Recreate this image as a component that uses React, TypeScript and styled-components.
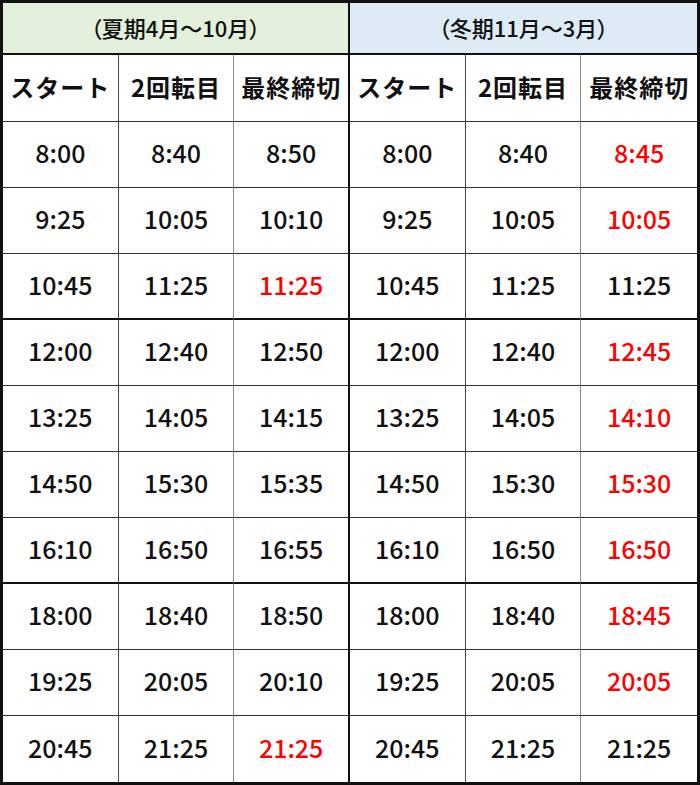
import React from "react";
import styled, { createGlobalStyle } from "styled-components";

const GlobalStyle = createGlobalStyle`
  html, body { margin: 0; padding: 0; background: #ffffff; }
  body { font-family: "Noto Sans CJK JP", "Noto Sans", sans-serif; }
`;

type Right = "thick" | "dark" | "light" | "none";
type Bottom = "thick" | "thin" | "none";

const rightBorder: Record<Right, string> = {
  thick: "2px solid #111",
  dark: "1px solid #444",
  light: "1px solid #8a8a8a",
  none: "none",
};
const bottomBorder: Record<Bottom, string> = {
  thick: "2px solid #111",
  thin: "1px solid #333",
  none: "none",
};

const Table = styled.div`
  box-sizing: border-box;
  width: 700px;
  height: 785px;
  border: 3px solid #111;
  display: grid;
  grid-template-columns: repeat(6, 1fr);
  grid-template-rows: 52px 67px repeat(10, 66px);
  font-family: "Noto Sans CJK JP", "Noto Sans", sans-serif;
  color: #111;
`;

const Cell = styled.div<{ $right: Right; $bottom: Bottom; $red?: boolean }>`
  box-sizing: border-box;
  display: flex;
  align-items: center;
  justify-content: center;
  border-right: ${(p) => rightBorder[p.$right]};
  border-bottom: ${(p) => bottomBorder[p.$bottom]};
  font-size: 25px;
  font-weight: 500;
  color: ${(p) => (p.$red ? "#ff0000" : "#111")};
  letter-spacing: 0;
  padding-bottom: 5px;
`;

const SeasonCell = styled(Cell)<{ $bg: string }>`
  grid-column: span 3;
  background: ${(p) => p.$bg};
  font-size: 22px;
  font-weight: 500;
  padding-bottom: 2px;
`;

const HeadCell = styled(Cell)`
  font-size: 24px;
  font-weight: 700;
  letter-spacing: 1px;
  padding-bottom: 4px;
`;

const Paren = styled.span`
  font-feature-settings: "palt";
`;

const columns = ["スタート", "2回転目", "最終締切"];

type Row = { s: string[]; w: string[]; sr?: boolean; wr?: boolean };

const rows: Row[] = [
  { s: ["8:00", "8:40", "8:50"], w: ["8:00", "8:40", "8:45"], wr: true },
  { s: ["9:25", "10:05", "10:10"], w: ["9:25", "10:05", "10:05"], wr: true },
  { s: ["10:45", "11:25", "11:25"], w: ["10:45", "11:25", "11:25"], sr: true },
  { s: ["12:00", "12:40", "12:50"], w: ["12:00", "12:40", "12:45"], wr: true },
  { s: ["13:25", "14:05", "14:15"], w: ["13:25", "14:05", "14:10"], wr: true },
  { s: ["14:50", "15:30", "15:35"], w: ["14:50", "15:30", "15:30"], wr: true },
  { s: ["16:10", "16:50", "16:55"], w: ["16:10", "16:50", "16:50"], wr: true },
  { s: ["18:00", "18:40", "18:50"], w: ["18:00", "18:40", "18:45"], wr: true },
  { s: ["19:25", "20:05", "20:10"], w: ["19:25", "20:05", "20:05"], wr: true },
  { s: ["20:45", "21:25", "21:25"], w: ["20:45", "21:25", "21:25"], sr: true },
];

const rightFor = (i: number): Right => {
  if (i === 5) return "none";
  if (i === 2) return "thick";
  if (i === 1 || i === 4) return "light";
  return "dark";
};

const bottomFor = (r: number): Bottom => {
  if (r === 9) return "none";
  if (r === 2 || r === 6) return "thick";
  return "thin";
};

export default function App() {
  return (
    <>
      <GlobalStyle />
      <Table>
        <SeasonCell $right="thick" $bottom="thick" $bg="#e2efda">
          <Paren>（</Paren>夏期4月～10月<Paren>）</Paren>
        </SeasonCell>
        <SeasonCell $right="none" $bottom="thick" $bg="#ddebf7">
          <Paren>（</Paren>冬期11月～3月<Paren>）</Paren>
        </SeasonCell>
        {[...columns, ...columns].map((c, i) => (
          <HeadCell key={`h${i}`} $right={rightFor(i)} $bottom="thin">
            {c}
          </HeadCell>
        ))}
        {rows.map((row, r) =>
          [...row.s, ...row.w].map((t, i) => (
            <Cell
              key={`${r}-${i}`}
              $right={rightFor(i)}
              $bottom={bottomFor(r)}
              $red={(i === 2 && row.sr) || (i === 5 && row.wr)}
            >
              {t}
            </Cell>
          ))
        )}
      </Table>
    </>
  );
}
